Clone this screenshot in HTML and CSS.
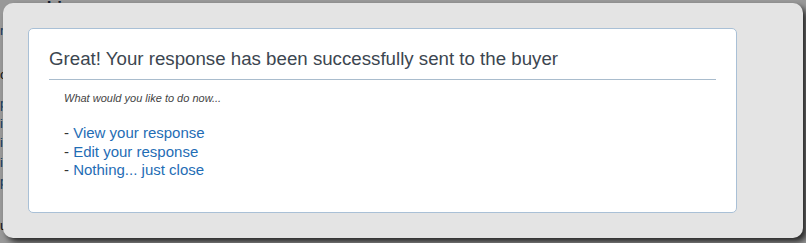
FILE: index.html
```html
<!DOCTYPE html>
<html lang="en">
<head>
  <meta charset="UTF-8" />
  <title>Response sent</title>
  <link rel="stylesheet" href="styles.css">
</head>
<body>
  <!-- page behind the dialog -->
  <div class="page">
    <h2 class="page-title">geschinn</h2>
    <ul class="side-links">
      <li>r</li>
      <li class="dark gap">c</li>
      <li class="step">p</li>
      <li>i</li>
      <li>i</li>
      <li>i</li>
      <li>p</li>
      <li class="dark gap">u</li>
    </ul>
  </div>

  <div class="overlay"></div>

  <div class="dialog">
    <div class="card">
      <h1 class="card-title">Great! Your response has been successfully sent to the buyer</h1>
      <p class="question">What would you like to do now...</p>
      <ul class="actions">
        <li>- <a href="#">View your response</a></li>
        <li>- <a href="#">Edit your response</a></li>
        <li>- <a href="#">Nothing... just close</a></li>
      </ul>
    </div>
  </div>
</body>
</html>
```

FILE: styles.css
```css
body {
  margin: 0;
  height: 243px;
  overflow: hidden;
  background: #fff;
  font-family: Arial, "Liberation Sans", sans-serif;
}
.page-title {
  margin: 0 0 0 8px;
  font-size: 17px;
  line-height: 15px;
  color: #1c3552;
}
.side-links {
  list-style: none;
  margin: 6px 0 0 0;
  padding: 0;
  font-size: 13px;
  line-height: 19.5px;
  color: #1a5fa0;
}
.side-links li.dark { color: #222; }
.side-links li.gap { margin-top: 24px; }
.side-links li.step { margin-top: 10px; }

.overlay {
  position: fixed;
  inset: 0;
  background: rgba(0, 0, 0, 0.4);
}

.dialog {
  position: fixed;
  top: 3px;
  left: 3px;
  width: 800px;
  height: 235px;
  box-sizing: border-box;
  padding: 25px 66px 25px 25px;
  background: #e4e4e4;
  border-radius: 10px;
  box-shadow: 4px 4px 6px rgba(0, 0, 0, 0.75);
}
.card {
  height: 100%;
  box-sizing: border-box;
  background: #fff;
  border: 1px solid #a9c0d6;
  border-radius: 5px;
  padding: 19px 20px 0 20px;
}
.card-title {
  margin: 0;
  padding-bottom: 9px;
  border-bottom: 1px solid #a9bccd;
  font-size: 18.7px;
  font-weight: normal;
  color: #3c4650;
}
.question {
  margin: 12px 0 20px 15px;
  font-size: 11px;
  font-style: italic;
  color: #444;
}
.actions {
  list-style: none;
  margin: 0 0 0 15px;
  padding: 0;
  font-size: 15px;
  line-height: 18.5px;
  color: #333;
}
.actions a {
  color: #1f6db5;
  text-decoration: none;
}
```
